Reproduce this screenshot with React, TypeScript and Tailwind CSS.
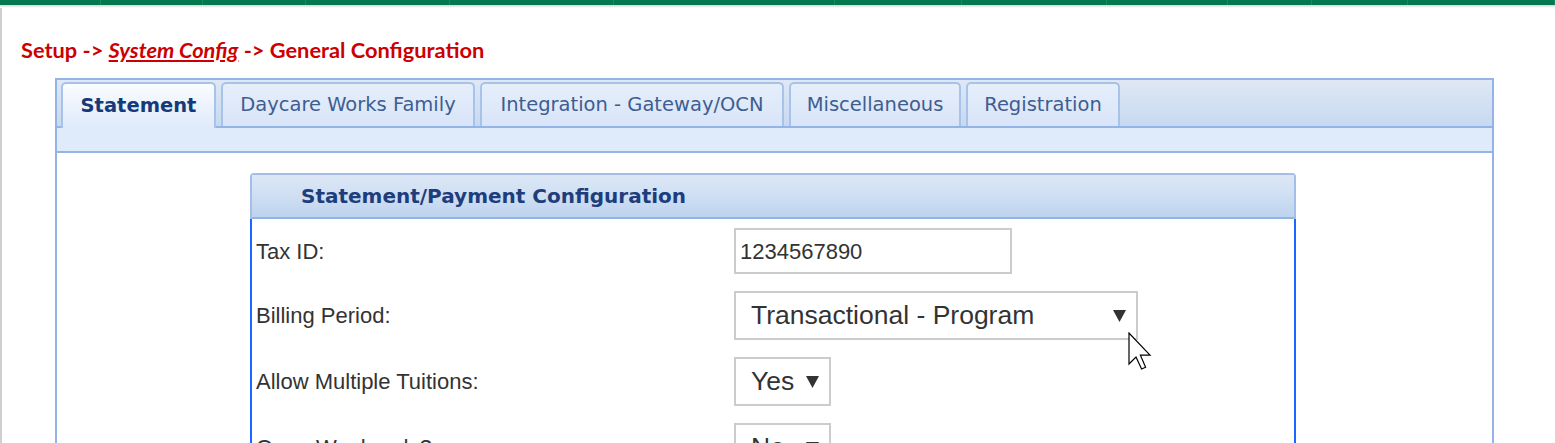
import React from "react";

const segs = [101, 102, 103, 144, 164, 221, 127, 145, 121, 84, 96, 147];

function Arrow() {
  return (
    <svg width="13" height="12" viewBox="0 0 13 12" className="shrink-0">
      <polygon points="0,0 13,0 6.5,12" fill="#333333" />
    </svg>
  );
}

function Cursor() {
  return (
    <svg
      width="24"
      height="38"
      viewBox="0 0 12 19"
      className="absolute left-[1128px] top-[332px]"
    >
      <path
        d="M0.5,0.5 L0.5,16 L4,12.5 L6.8,18.5 L8.8,17.6 L6.2,11.6 L11,11.6 Z"
        fill="#ffffff"
        stroke="#000000"
        strokeWidth="0.6"
        strokeLinejoin="miter"
      />
    </svg>
  );
}

const tabs: { label: string; w: string }[] = [
  { label: "Statement", w: "w-[155px]" },
  { label: "Daycare Works Family", w: "w-[254px]" },
  { label: "Integration - Gateway/OCN", w: "w-[304px]" },
  { label: "Miscellaneous", w: "w-[172px]" },
  { label: "Registration", w: "w-[154px]" },
];

export default function App() {
  return (
    <div className="relative w-[1555px] h-[443px] overflow-hidden bg-white">
      {/* top green bar */}
      <div className="flex h-[5px] bg-[#00794e]">
        {segs.map((w, i) => (
          <div
            key={i}
            className="h-full border-r border-[#168a5e]"
            style={{ width: w }}
          />
        ))}
      </div>
      <div className="h-[3px] bg-gradient-to-b from-[#d4d4d4] to-[#ffffff]" />

      <div className="border-l-2 border-[#cfcfcf] h-[435px]">
        {/* breadcrumb */}
        <div
          className="pl-[19px] pt-[28px] h-[70px] text-[21.8px] font-bold text-[#cc0000] leading-[28px]"
          style={{ fontFamily: "Lato, 'Noto Sans', sans-serif" }}
        >
          Setup -&gt; <span className="italic underline">System Config</span> -&gt; General Configuration
        </div>

        {/* outer tab panel */}
        <div className="ml-[53px] w-[1439px] border-2 border-[#94b4e6] h-[400px]">
          <div
            className="flex items-end gap-[5px] pl-[4px] h-[48px] bg-gradient-to-b from-[#dfe8f5] to-[#c7d9f1] border-b-2 border-[#94b4e6]"
            style={{ fontFamily: "'DejaVu Sans', Verdana, sans-serif" }}
          >
            {tabs.map((t, i) =>
              i === 0 ? (
                <div
                  key={t.label}
                  className={`${t.w} relative z-10 -mb-[2px] h-[46px] flex items-center justify-center border-2 border-b-0 border-[#a8c3ea] rounded-t-[5px] bg-gradient-to-b from-[#fafcff] to-[#dfeafa] text-[19.5px] font-bold text-[#16397a]`}
                >
                  {t.label}
                </div>
              ) : (
                <div
                  key={t.label}
                  className={`${t.w} h-[44px] flex items-center justify-center border-2 border-b-0 border-[#a8c3ea] rounded-t-[5px] bg-gradient-to-b from-[#e6eefa] to-[#d8e5f8] text-[19.5px] text-[#3e5d92]`}
                >
                  {t.label}
                </div>
              )
            )}
          </div>
          <div className="h-[25px] bg-[#dfeafa] border-b-2 border-[#94b4e6]" />

          {/* inner panel */}
          <div className="ml-[193px] mt-[20px] w-[1046px]">
            <div
              className="h-[46px] border-2 border-b-0 border-[#a3bfe8] rounded-t-[4px] flex flex-col"
              style={{ fontFamily: "'DejaVu Sans', Verdana, sans-serif" }}
            >
              <div className="flex-1 flex items-center pl-[49px] bg-gradient-to-b from-[#dce7f6] via-[#cfdff3] to-[#bed3ee] border-b-2 border-[#94b4e6]">
                <span className="text-[20px] font-bold text-[#1d3d7d]">
                  Statement/Payment Configuration
                </span>
              </div>
            </div>
            <div
              className="border-l-2 border-r-2 border-[#1a66ff] h-[240px] pt-[9px] flex flex-col gap-[17px] text-[#333333]"
              style={{ fontFamily: "'Liberation Sans', Arial, sans-serif" }}
            >
              <div className="flex items-center">
                <div className="w-[482px] pl-[4px] text-[22px]">Tax ID:</div>
                <div className="w-[278px] h-[46px] border-2 border-[#cccccc] flex items-center pl-[4px] text-[22px]">
                  1234567890
                </div>
              </div>
              <div className="flex items-center">
                <div className="w-[482px] pl-[4px] text-[22px]">Billing Period:</div>
                <div className="w-[404px] h-[49px] border-2 border-[#cccccc] flex items-center justify-between pl-[15px] pr-[10px] text-[26.5px]">
                  <span>Transactional - Program</span>
                  <Arrow />
                </div>
              </div>
              <div className="flex items-center">
                <div className="w-[482px] pl-[4px] text-[22px]">Allow Multiple Tuitions:</div>
                <div className="w-[97px] h-[49px] border-2 border-[#cccccc] flex items-center justify-between pl-[15px] pr-[10px] text-[26.5px]">
                  <span>Yes</span>
                  <Arrow />
                </div>
              </div>
              <div className="flex items-center">
                <div className="w-[482px] pl-[4px] text-[22px]">Open Weekends?:</div>
                <div className="w-[97px] h-[49px] border-2 border-[#cccccc] flex items-center justify-between pl-[15px] pr-[10px] text-[26.5px]">
                  <span>No</span>
                  <Arrow />
                </div>
              </div>
            </div>
          </div>
        </div>
      </div>

      <Cursor />
    </div>
  );
}
